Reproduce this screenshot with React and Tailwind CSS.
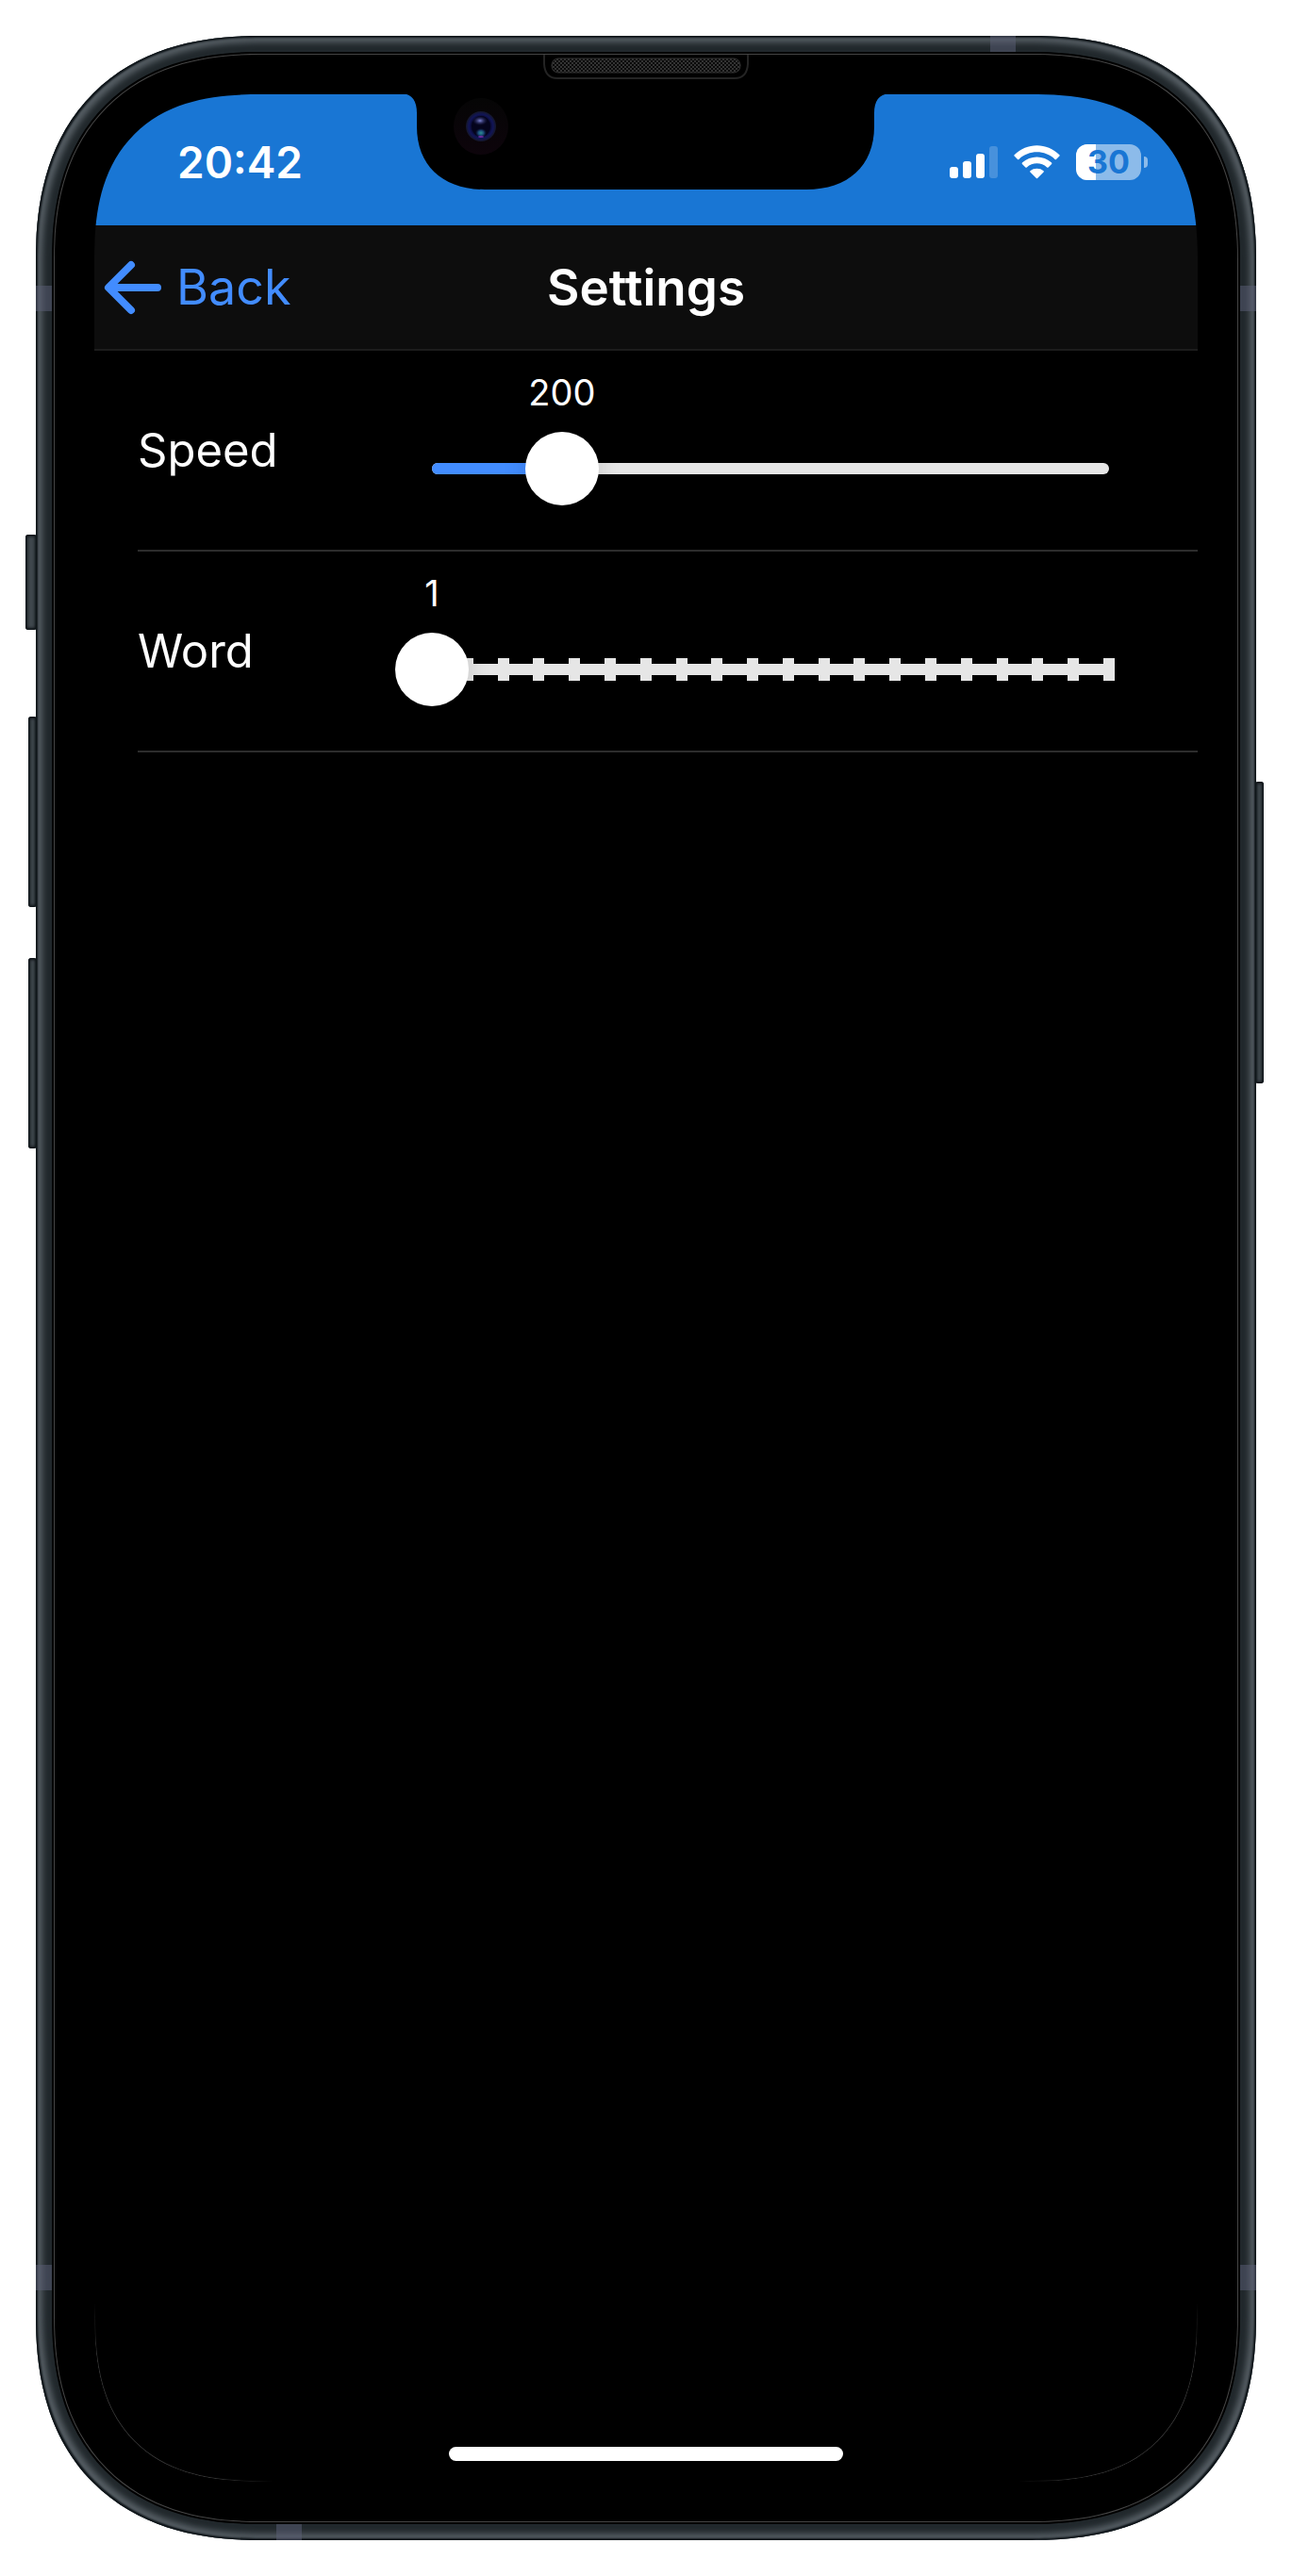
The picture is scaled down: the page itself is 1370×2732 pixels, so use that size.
import { useState } from "react";

const BANDS = [
  "top-[265px] left-0 h-[27px] w-[17px]",
  "top-[265px] right-0 h-[27px] w-[17px]",
  "bottom-[265px] left-0 h-[27px] w-[17px]",
  "bottom-[265px] right-0 h-[27px] w-[17px]",
  "top-0 right-[255px] h-[17px] w-[27px]",
  "bottom-0 left-[255px] h-[17px] w-[27px]",
];

const SIDE_KEYS = [
  "top-[529px] -left-[11px] h-[101px] w-[12px]",
  "top-[722px] -left-[8px] h-[202px] w-[9px]",
  "top-[978px] -left-[8px] h-[202px] w-[9px]",
  "top-[791px] -right-[8px] h-[320px] w-[9px]",
];

function Notch() {
  return (
    <svg
      className="absolute top-0 left-1/2 h-[146px] w-[524px] -translate-x-1/2"
      viewBox="423 58 524 146"
      aria-hidden="true"
    >
      <defs>
        <pattern id="mesh" width="4" height="4" patternUnits="userSpaceOnUse">
          <rect width="4" height="4" fill="#0a0a0a" />
          <rect width="2" height="2" fill="#333" />
          <rect x="2" y="2" width="2" height="2" fill="#333" />
        </pattern>
        <linearGradient id="lensRing" x1="0" y1="0" x2="0" y2="1">
          <stop offset="0" stopColor="#050505" />
          <stop offset="1" stopColor="#0d040b" />
        </linearGradient>
        <radialGradient id="lens">
          <stop offset="0" stopColor="#06061c" />
          <stop offset="0.6" stopColor="#08082c" />
          <stop offset="0.8" stopColor="#111557" />
          <stop offset="1" stopColor="#151728" />
        </radialGradient>
        <radialGradient id="glintTop">
          <stop offset="0" stopColor="#7f86d8" />
          <stop offset="1" stopColor="#20225a" stopOpacity="0" />
        </radialGradient>
        <radialGradient id="glintBottom">
          <stop offset="0" stopColor="#2c8f8f" />
          <stop offset="0.5" stopColor="#1a4a78" />
          <stop offset="1" stopColor="#10204a" stopOpacity="0" />
        </radialGradient>
      </defs>
      <path
        d="M423 99H427C437 100 442 107 442 120V134C442 176 470 201 514 201H855C899 201 927 176 927 134V120C927 107 932 100 943 99H947V99Z"
        fill="#000"
      />
      <path
        d="M577 57V68Q578 83 591 83H779Q792 83 793 68V57"
        fill="none"
        stroke="#242424"
        strokeWidth="2"
      />
      <rect x="585" y="62" width="200" height="15" rx="7" fill="url(#mesh)" stroke="#333" />
      <ellipse cx="510" cy="134" rx="29" ry="30" fill="url(#lensRing)" />
      <circle cx="510" cy="134" r="16" fill="url(#lens)" />
      <ellipse cx="510" cy="134" rx="10" ry="11" fill="#04041c" />
      <ellipse cx="509" cy="128" rx="8" ry="5" fill="url(#glintTop)" />
      <ellipse cx="510" cy="141" rx="6" ry="5" fill="url(#glintBottom)" />
      <ellipse cx="510" cy="145" rx="3" ry="1" fill="#6a2a9c" />
    </svg>
  );
}

function SignalIcon() {
  return (
    <svg className="h-[34px] w-[51px]" viewBox="0 0 51 34" fill="#fff" role="img" aria-label="Signal">
      <rect x="0" y="22" width="9" height="12" rx="3" />
      <rect x="14" y="16" width="9" height="18" rx="3" />
      <rect x="28" y="8" width="9" height="26" rx="3" />
      <rect x="42" y="0" width="9" height="34" rx="3" opacity="0.2" />
    </svg>
  );
}

function WifiIcon() {
  return (
    <svg className="h-[36px] w-[49px]" viewBox="0 0 49 36" fill="#fff" role="img" aria-label="Wi-Fi">
      <path d="M0.6 10.2C13.6-3.2 35.4-3.2 48.4 10.2Q49 10.9 48.4 11.5L45 15Q44.3 15.6 43.6 15C33 4.8 16 4.8 5.4 15Q4.7 15.6 4 15L0.6 11.5Q0 10.9 0.6 10.2Z" />
      <path d="M8.9 18.6C17.5 10.5 31.5 10.5 40.1 18.6Q40.7 19.3 40.1 19.9L36.6 23.4Q35.9 24 35.2 23.4C29.2 18 19.8 18 13.8 23.4Q13.1 24 12.4 23.4L8.9 19.9Q8.3 19.3 8.9 18.6Z" />
      <path d="M17.4 27.2C21.3 23.9 27.7 23.9 31.6 27.2Q32.3 27.9 31.6 28.5L25.1 35.1Q24.5 35.6 23.9 35.1L17.4 28.5Q16.7 27.9 17.4 27.2Z" />
    </svg>
  );
}

function Battery({ level }) {
  return (
    <div className="flex items-center gap-[3px]">
      <div className="relative h-[38px] w-[69px] rounded-[12px] bg-white/50">
        <div className="h-full rounded-l-[12px] bg-white" style={{ width: level + "%" }} />
        <span className="absolute inset-0 text-center text-[34px] leading-[38px] font-bold text-[#1976d4]">
          {level}
        </span>
      </div>
      <div className="h-[12px] w-[4px] rounded-r-full bg-white/50" />
    </div>
  );
}

function StatusBar() {
  return (
    <div className="relative flex h-[139px] items-center justify-between bg-[#1976d4] pt-[5px] pr-[53px] pl-[88px] text-white">
      <time className="text-[46px] leading-[54px] font-semibold">20:42</time>
      <div className="flex items-center gap-[17px]">
        <SignalIcon />
        <WifiIcon />
        <Battery level={30} />
      </div>
    </div>
  );
}

function Header() {
  return (
    <header className="grid h-[133px] grid-cols-[1fr_auto_1fr] items-center border-b-2 border-[#1c1c1c] bg-[#0d0d0d] px-[10px]">
      <button type="button" className="flex items-center gap-[15px] text-[52px] leading-[60px] text-[#428cff]">
        <svg
          className="h-[58px] w-[62px]"
          viewBox="0 0 62 58"
          fill="none"
          stroke="currentColor"
          strokeWidth="8"
          strokeLinecap="round"
          strokeLinejoin="round"
          aria-hidden="true"
        >
          <path d="M29 5L5 29L29 53M6 29H57" />
        </svg>
        Back
      </button>
      <h1 className="text-[53px] leading-[60px] font-semibold text-white">Settings</h1>
    </header>
  );
}

function RangeRow({ id, label, min, max, initial, ticks }) {
  const [value, setValue] = useState(initial);
  const percent = ((value - min) / (max - min)) * 100;
  const marks = ticks ? Array.from({ length: max - min + 1 }, (_, i) => (i / (max - min)) * 100) : [];

  return (
    <div className="ml-[46px] flex items-center border-b-2 border-[#2c2c2c] text-white">
      <label htmlFor={id} className="w-[312px] shrink-0 text-[49px] leading-[60px]">
        {label}
      </label>
      <div className="mr-[94px] flex-1 pt-6 pb-[47px]">
        <div className="relative h-[42px]">
          <output
            htmlFor={id}
            className="absolute top-0 -translate-x-1/2 text-[38px] leading-[40px]"
            style={{ left: percent + "%" }}
          >
            {value}
          </output>
        </div>
        <div className="relative mt-5 flex h-[78px] items-center">
          <div className={ticks ? "h-[12px] w-full bg-[#e6e6e6]" : "h-[12px] w-full overflow-hidden rounded-full bg-[#e6e6e6]"}>
            <div className="h-full bg-[#428cff]" style={{ width: percent + "%" }} />
          </div>
          {marks.map((left) => (
            <span
              key={left}
              className="absolute h-6 w-3 -translate-x-1/2 bg-[#e6e6e6]"
              style={{ left: left + "%" }}
            />
          ))}
          <input
            id={id}
            type="range"
            min={min}
            max={max}
            value={value}
            onChange={(e) => setValue(Number(e.target.value))}
            className="absolute -inset-x-[39px] inset-y-0 cursor-pointer appearance-none bg-transparent [&::-webkit-slider-thumb]:size-[78px] [&::-webkit-slider-thumb]:appearance-none [&::-webkit-slider-thumb]:rounded-full [&::-webkit-slider-thumb]:bg-white [&::-webkit-slider-thumb]:shadow-[0_1px_24px_rgba(0,0,0,0.15)]"
          />
        </div>
      </div>
    </div>
  );
}

export default function App() {
  return (
    <div className="flex min-h-screen bg-white p-[38px] font-['Inter',sans-serif]">
      <div className="relative flex flex-1">
        {SIDE_KEYS.map((place) => (
          <div
            key={place}
            className={`absolute rounded-[3px] bg-[#3f474d] shadow-[inset_0_0_3px_2px_#0c1115] ${place}`}
          />
        ))}
        <div className="relative flex flex-1 overflow-hidden rounded-[206px] bg-[#21282c] p-[17px] shadow-[inset_0_0_2px_2px_#0c1216,inset_0_0_6px_7px_#565e64] [corner-shape:superellipse(1.23)] supports-[corner-shape:squircle]:rounded-[238px]">
          {BANDS.map((place) => (
            <div key={place} className={`absolute bg-[#5c6078]/50 ${place}`} />
          ))}
          <div className="relative flex flex-1 rounded-[189px] border-2 border-black bg-black [corner-shape:superellipse(1.23)] supports-[corner-shape:squircle]:rounded-[221px]">
            <div className="relative flex flex-1 rounded-[187px] border border-[#454545] p-[42px] [corner-shape:superellipse(1.23)] supports-[corner-shape:squircle]:rounded-[219px]">
              <main className="relative flex flex-1 flex-col overflow-hidden rounded-[144px] bg-black [corner-shape:superellipse(1.35)] supports-[corner-shape:squircle]:rounded-[178px]">
                <StatusBar />
                <Header />
                <RangeRow id="speed" label="Speed" min={10} max={1000} initial={200} />
                <RangeRow id="word" label="Word" min={1} max={20} initial={1} ticks />
                <div className="mx-auto mt-auto mb-[22px] h-[15px] w-[418px] rounded-full bg-white" />
                <div className="absolute bottom-0 left-0 size-[190px] rounded-bl-[144px] border-b border-l border-[#333] mask-[linear-gradient(45deg,black_35%,transparent_50%)] [corner-shape:superellipse(1.35)] supports-[corner-shape:squircle]:rounded-bl-[178px]" />
                <div className="absolute right-0 bottom-0 size-[190px] rounded-br-[144px] border-r border-b border-[#333] mask-[linear-gradient(-45deg,black_35%,transparent_50%)] [corner-shape:superellipse(1.35)] supports-[corner-shape:squircle]:rounded-br-[178px]" />
              </main>
              <Notch />
            </div>
          </div>
        </div>
      </div>
    </div>
  );
}
